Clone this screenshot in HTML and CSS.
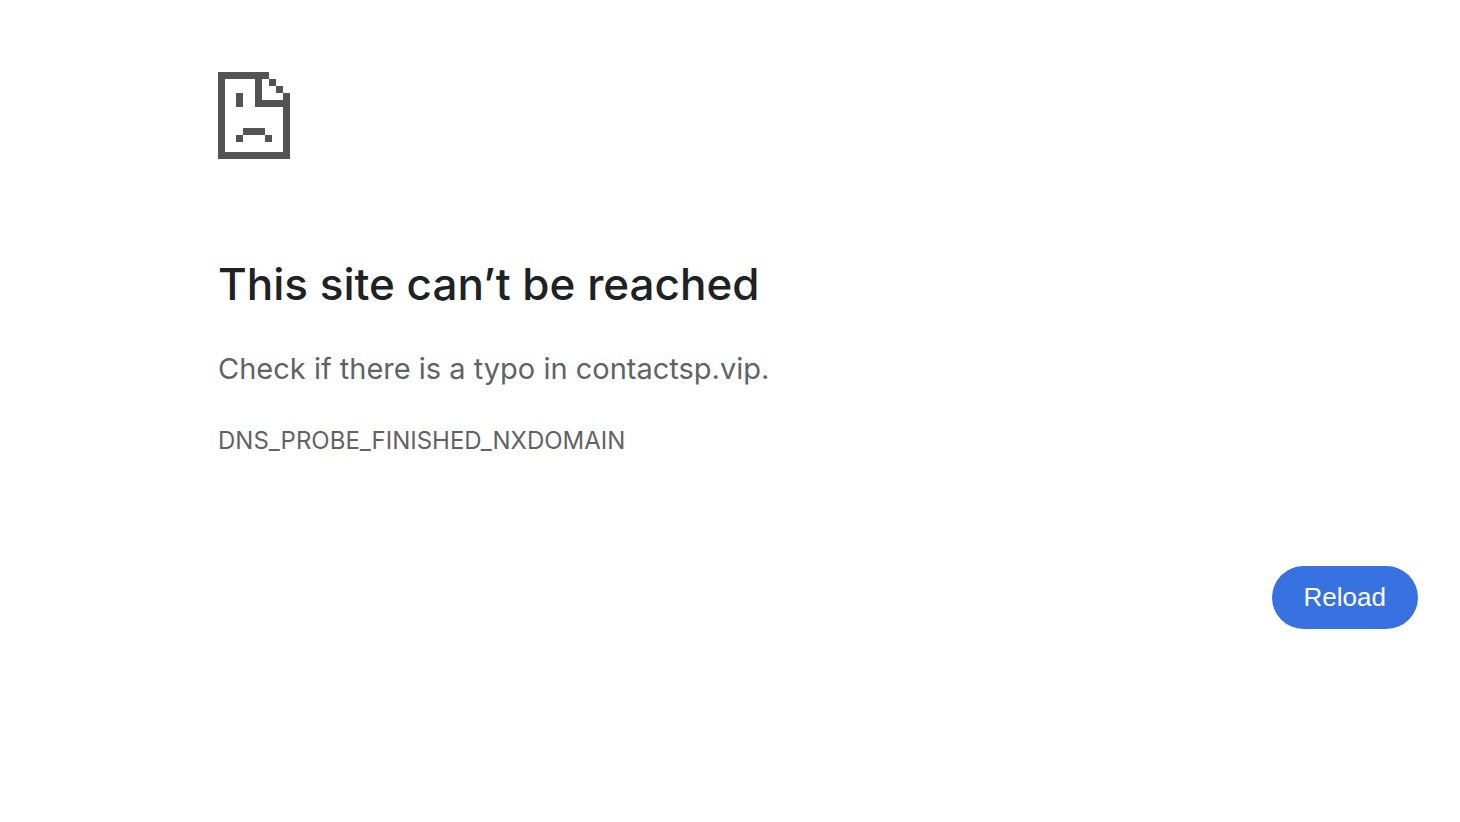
FILE: index.html
```html
<!DOCTYPE html>
<html lang="en">
<head>
  <meta charset="UTF-8">
  <meta name="viewport" content="width=device-width, initial-scale=1.0">
  <title>contactsp.vip</title>
  <link rel="stylesheet" href="styles.css">
</head>
<body>

<main class="error-page">
  <svg class="error-icon" viewBox="0 0 72 87" width="72" height="87" shape-rendering="crispEdges" aria-hidden="true">
    <!-- page outline -->
    <path d="M0 0H51V7H44V28H65V21H72V87H0ZM7 7V80H65V35H37V7Z" fill-rule="evenodd"/>
    <!-- folded corner -->
    <path d="M51 7h7v7h-7zM58 14h7v7h-7z"/>
    <!-- sad face -->
    <path d="M18 21h7v14h-7zM25 56h22v7h-22zM18 63h7v7h-7zM47 63h7v7h-7z"/>
  </svg>

  <h1>This site can’t be reached</h1>
  <p class="summary">Check if there is a typo in contactsp.vip.</p>
  <p class="error-code">DNS_PROBE_FINISHED_NXDOMAIN</p>

  <div class="actions">
    <button type="button" class="reload" onclick="location.reload()">Reload</button>
  </div>
</main>

</body>
</html>
```

FILE: styles.css
```css
body {
  margin: 0;
  background-color: #fff;
  color: #5f6368;
  font-family: Inter, "Liberation Sans", sans-serif;
}
.error-page {
  padding: 72px 42px 72px 218px;
}
.error-icon {
  display: block;
  fill: #535353;
}
h1 {
  margin: 96px 0 32px;
  color: #202124;
  font-size: 44px;
  font-weight: 500;
  line-height: 58px;
}
.summary {
  margin: 0;
  font-size: 29px;
  line-height: 48px;
}
.error-code {
  margin: 24px 0 0;
  font-size: 24px;
  line-height: 48px;
}
.actions {
  display: flex;
  justify-content: flex-end;
  margin-top: 101px;
}
.reload {
  padding: 16px 32px;
  border: none;
  border-radius: 32px;
  background-color: #3871e0;
  color: #fff;
  font-family: "Liberation Sans", Arial, sans-serif;
  font-size: 26px;
  line-height: 31px;
  cursor: pointer;
}
.reload:hover {
  background-color: #2f64cc;
}
```
